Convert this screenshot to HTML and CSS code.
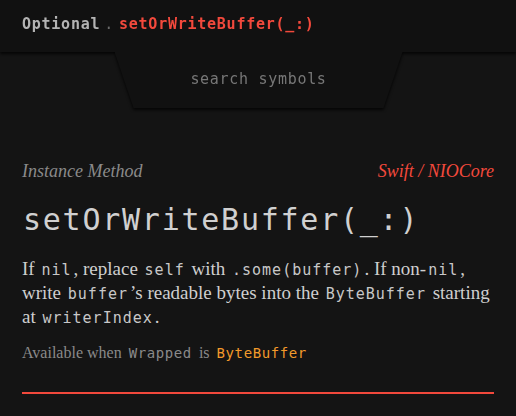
FILE: index.html
```html
<!DOCTYPE html>
<html>
<head>
<meta charset="utf-8">
<link rel="stylesheet" href="styles.css">
</head>
<body>
<div class="top">
  <header class="bar">
    <nav class="crumbs">
      <span class="crumb">Optional</span>
      <span class="sep">.</span>
      <span class="crumb current">setOrWriteBuffer(_:)</span>
    </nav>
  </header>
  <div class="search">
    <span class="placeholder">search symbols</span>
  </div>
</div>
<main class="content">
  <div class="meta">
    <span class="kind">Instance Method</span>
    <span class="module">Swift / NIOCore</span>
  </div>
  <h1 class="title">setOrWriteBuffer(_:)</h1>
  <p class="summary">If <code>nil</code>, replace <code>self</code> with <code>.some(buffer)</code>. If <span class="nowrap">non-<code>nil</code>,</span> write <code>buffer</code>’s readable bytes into the <code>ByteBuffer</code> starting at <code>writerIndex</code>.</p>
  <p class="avail">Available when <code>Wrapped</code> is <code class="type">ByteBuffer</code></p>
  <hr class="rule">
</main>
</body>
</html>
```
FILE: styles.css
```css
html, body {
  margin: 0;
  padding: 0;
  background: #141414;
}
body {
  width: 516px;
  height: 416px;
  overflow: hidden;
}
.top {
  filter: drop-shadow(0 2px 1.5px rgba(0, 0, 0, 0.75));
}
.bar {
  height: 52px;
  background: #111111;
  display: flex;
  align-items: center;
  padding: 0 22px;
}
.crumbs {
  display: flex;
  align-items: baseline;
  gap: 4px;
  font-family: "DejaVu Sans Mono", monospace;
  font-weight: bold;
  font-size: 15px;
  letter-spacing: 0.75px;
  margin-top: -5px;
}
.crumb { color: #b4b4b4; }
.sep { color: #6a6a6a; font-weight: normal; margin-right: 1px; }
.current { color: #f2493c; }
.search {
  width: 288px;
  height: 56px;
  margin: 0 auto;
  background: #111111;
  clip-path: polygon(0 0, 100% 0, 93.4% 100%, 6.6% 100%);
  display: flex;
  align-items: center;
  justify-content: center;
  position: relative;
  left: 0.5px;
}
.placeholder {
  font-family: "DejaVu Sans Mono", monospace;
  font-size: 15px;
  letter-spacing: 0.7px;
  color: #777777;
  margin-bottom: 3px;
}
.content {
  padding: 52px 22px 0;
}
.meta {
  display: flex;
  justify-content: space-between;
  align-items: baseline;
  font-family: "Liberation Serif", serif;
  font-style: italic;
  font-size: 18px;
  line-height: 22px;
}
.kind { color: #8a8a8a; }
.module { color: #f2493c; }
.title {
  margin: 18px 0 0;
  font-family: "DejaVu Sans Mono", monospace;
  font-weight: normal;
  font-size: 30px;
  letter-spacing: 1.75px;
  color: #d0d0d0;
  line-height: 40px;
  padding-left: 1px;
}
.summary {
  margin: 17px 0 0;
  font-family: "Liberation Serif", serif;
  font-size: 19px;
  line-height: 24px;
  color: #cfcfcf;
}
.nowrap { white-space: nowrap; }
code {
  font-family: "DejaVu Sans Mono", monospace;
  font-size: 15px;
  line-height: 1;
  letter-spacing: 1px;
  padding: 0 2px;
  color: #c8c8c8;
}
.avail {
  margin: 13px 0 0;
  font-family: "Liberation Serif", serif;
  font-size: 16px;
  line-height: 22px;
  color: #8a8a8a;
}
.avail code {
  font-size: 14px;
  letter-spacing: 0.6px;
  padding: 0 3px;
  color: #8a8a8a;
}
.avail code.type { color: #f39a2b; }
.rule {
  margin: 28px 0 0;
  border: 0;
  height: 2px;
  background: #f2493c;
}
```
